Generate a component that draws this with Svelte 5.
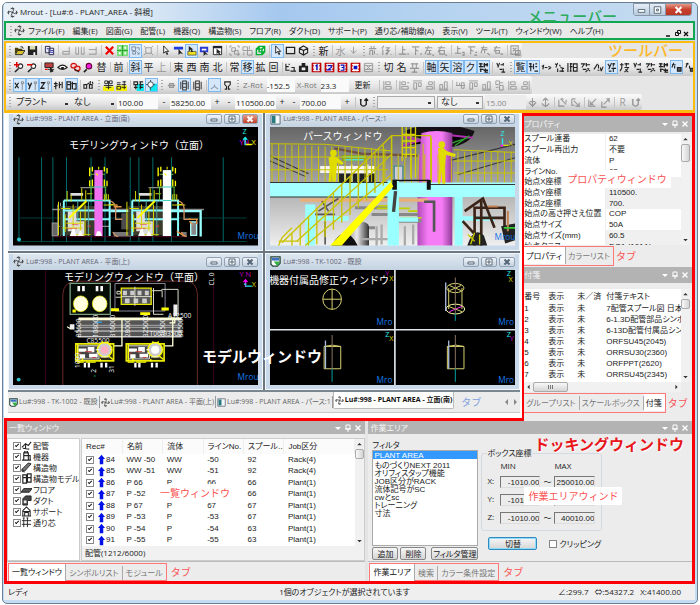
<script>
  // Toolbar tokens: '|' separator, ':' grip, '*' pressed, '~' disabled, '@' icon, otherwise a text button
  const parse = (line) =>
    line.split(' ').map((raw) => {
      if (raw === '|') return { kind: 'sep' };
      if (raw === ':') return { kind: 'grip' };
      const on = raw.startsWith('*');
      const off = raw.startsWith('~');
      const body = on || off ? raw.slice(1) : raw;
      const icon = body.startsWith('@') ? body.slice(1) : null;
      return { kind: 'button', on, off, icon, text: icon ? '' : body };
    });

  const fileTools = parse(
    ': @open @save | @copy | ~@left ~@mid ~@right | @cross @quad *@tile ~@fit | @cursor @bluebar *@yellow @bluebox @window | ~@group ~@ungroup @greencube | *@cursor @rect @cube : 新 | ~水 ~@down : ~@mae ~@ato | ~@up1 ~@dn1 ~@lf1 ~@rt1 | ~@up2 ~@dn2 ~@lf2 ~@rt2 | ~@fig'
  );
  const viewTools = parse(
    ': @zoomin @zoomout | @car @eye @hide @magenta 替 | 前 | *斜 平 ~上 | 東 西 南 北 | 常 *移 拡 回 | @view @camera @cam1 @cam2 @cam3 @cam4 ~@camoff : 切 名 ~@base | *軸 *矢 *溶 *ク *@dense | @mini1 : *覧 *@list @mini2 @mini3 @dense2 @mini4 @mini5 *@mini6 @dense3 @mini1 @mini4 @dense *@mini7 @mini8'
  );
  const snapTools = parse(': *@x *@y *@z @slant *@snap | @link : @unit @detail | @dist *@circle : @node *@valve @valve | *@peak @omega :');
  const alignTools = parse('| ~@al1 | ~@al2 ~@al3 ~@al4 ~@al5 | ~@al6 ~@al3 ~@al5 ~@al7 ~@al1 ~@al4');
  const pipeTools = parse('~@anchor ~@anchor2 | ~@arr1 ~@arr2 | ~@arr3 ~@arr4 | ~R ~@hook');

  const k = '#222';
  const mini = (d) => [{ d, s: k, w: 1.2 }];
  const al = (d) => [{ d, s: k, w: 1 }];
  const frame = 'M1.5 1.5h9v9h-9zM1.5 4h9M1.5 8h9';
  const icons = {
    open: [{ d: 'M1 10V3h3l1 1h4v2H4z', f: '#4a4208' }, { d: 'M1.5 10.500L4 6h8l-3 4.500z', f: '#d8c030', s: '#222', w: 1 }, { d: 'M7 2q3-1 3 2', s: k, w: 1 }],
    save: [{ d: 'M1 1h10v10H1z', f: '#222' }, { d: 'M3 1h6v4H3z', f: '#d8dcb0' }, { d: 'M7 8h2v3H7z', f: '#fff' }],
    copy: [{ d: 'M1.500 1.500h5v7h-5zM5.500 3.500h5v7h-5z', f: '#e8e8ff', s: '#224', w: 1 }, { d: 'M7 6h3M7 8h3M3 4h2', s: '#33a', w: 1 }],
    left: [{ d: 'M9 2v8H2V7h7', s: k, w: 1 }],
    mid: [{ d: 'M2 2v8h3V2M8 2v8h3V2', s: k, w: 1 }],
    right: [{ d: 'M2 5h8v5H2M10 2v4', s: k, w: 1 }],
    cross: [{ d: 'M2 2l8 8M10 2L2 10', s: '#f00000', w: 2.4 }],
    quad: [{ d: 'M0 0h12v12H0z', f: '#7be07b' }, { d: 'M6 0v12M0 6h12', s: '#2aa52a', w: 1 }, { d: 'M2 3h2M8 3h2M2 9h2M8 9h2', s: '#fff', w: 2 }],
    tile: [{ d: 'M2 2h4v4H2zM7 3h3v3M3 7h3v3H3zM7 7l3 3M8 10h2V8', s: '#7d8da0', w: 1 }],
    fit: [{ d: 'M3 3h6v6H3zM1 1l2 2M11 1L9 3M1 11l2-2M11 11L9 9', s: k, w: 1 }],
    cursor: [{ d: 'M4 1v8l2-2 1.500 3.500 1-.5L7 7h2.500z', f: '#fff', s: k, w: 1 }],
    bluebar: [{ d: 'M1 2h10v3H1z', f: '#1a3ce0' }, { d: 'M6 4v7l2-2 3 1z', f: k }],
    yellow: [{ d: 'M2 7h9v4H2z', f: '#f0e020', s: '#664', w: 1 }, { d: 'M3 1v6l2-2 1 3 2-1-2-2h2z', f: k }],
    bluebox: [{ d: 'M1 2h9v6H1z', f: '#2a3ad0' }, { d: 'M3 4h5v2H3z', f: '#fff' }, { d: 'M5 6v6l2-2 3 1z', f: k }],
    window: [{ d: 'M1.500 1.500h9v9h-9z', f: '#fff', s: k, w: 1 }, { d: 'M1 1h10v2.500H1z', f: '#223' }, { d: 'M5 4v6l1.500-1.500L8 11l1-1-1-2h2z', f: k }],
    group: [{ d: 'M1 3V1h2M9 1h2v2M11 9v2H9M3 11H1V9M3 3h4v4H3zM6 6h4v4H6z', s: k, w: 1 }],
    ungroup: [{ d: 'M1 2h5v4H1zM6 6h5v5H6zM8 1v4M2 8v3', s: k, w: 1 }],
    greencube: [{ d: 'M1.500 4.500h6v6h-6zM4.500 1.500h6v6h-6zM1.500 4.500l3-3M7.500 4.500l3-3M7.500 10.500l3-3', s: '#00b030', w: 1.6 }],
    rect: [{ d: 'M1.500 2.500h9v7h-9z', s: k, w: 1.4 }],
    cube: [{ d: 'M6 1l4.500 2.500v5L6 11 1.500 8.500v-5zM1.500 3.500L6 6l4.500-2.500M6 6v5', s: k, w: 1.2 }],
    down: [{ d: 'M6 2v7M3 6l3 3 3-3', s: k, w: 1 }],
    mae: mini('M1 4h8M3 1l1 2M7 1L6 3M2 6h3v5M2 6v5M7 6v4M10 10v1'),
    ato: mini('M3 1L1 4M2 5v6M5 3h4L6 6h3L5 10M9 6l-3 5M11 10v1'),
    up1: mini('M5 1v9M1 10h8M5 5h3M11 9v2'),
    dn1: mini('M1 2h8M5 2v9M5 5l3 2M11 9v2'),
    lf1: mini('M1 3h8M5 1L1 10M3 6h5M6 6v4M3 10h5M9 11h2'),
    rt1: mini('M1 3h8M5 1L1 8M3 6h5v4H3zM9 11h2'),
    up2: mini('M4 1v8M1 9h7M4 4h3M9 8h2v3H9'),
    dn2: mini('M1 2h8M4 2v8M4 5l3 2M8 11h3M9 8h2'),
    lf2: mini('M1 3h7M4 1L1 9M3 5h5M5 5v4M8 9l3 2'),
    rt2: mini('M1 3h7M4 1L1 7M3 6h4v3H3zM8 10h3'),
    fig: mini('M1 1h8v9H1zM3 3l4 4M7 3L3 7M6 6h5v5H6z'),
    zoomin: [{ d: 'M5 7L1 11', s: k, w: 1.6 }, { d: 'M4.500 4.500a2.500 2.500 0 1 0 5 0 2.500 2.500 0 1 0-5 0', f: '#fff', s: k, w: 1.2 }, { d: 'M0 3h6M3 0v6', s: '#e00000', w: 1.6 }],
    zoomout: [{ d: 'M5 7L1 11', s: k, w: 1.6 }, { d: 'M4.500 4.500a2.500 2.500 0 1 0 5 0 2.500 2.500 0 1 0-5 0', f: '#fff', s: k, w: 1.2 }, { d: 'M0 3h6', s: '#e00000', w: 1.6 }],
    car: [{ d: 'M1 1h9v5H1z', f: '#c04040', s: k, w: 1 }, { d: 'M4 8h7M7 6v5l3-1z', f: k, s: k, w: 1 }, { d: 'M1 8h3', s: '#e00', w: 1.5 }],
    eye: [{ d: 'M1 6q5-5 10 0q-5 4-10 0z', f: '#fff', s: k, w: 1.2 }, { d: 'M4.500 5.500h3v2.500h-3z', f: k }],
    hide: [{ d: 'M1 4a3 2.500 0 1 0 6 0 3 2.500 0 1 0-6 0M5 7a3 2.500 0 1 0 6 0 3 2.500 0 1 0-6 0', f: '#f8d0d0', s: '#d01010', w: 1.3 }, { d: 'M5 8l5 3', s: k, w: 1.2 }],
    magenta: [{ d: 'M4 8L1 11', s: k, w: 1.8 }, { d: 'M3.500 4.500a3 3 0 1 0 6 0 3 3 0 1 0-6 0', f: '#f020e0', s: '#603', w: 1.2 }],
    view: mini('M1 2v7h4M1 5h3M4 2l1 1M7 6h3v4M6 10h6'),
    camera: [{ d: 'M1 4h10v7H1zM4 1h4v3H4z', f: k }, { d: 'M4 6h4v3H4z', f: '#eee' }],
    cam1: [{ d: frame, f: '#e6dcea', s: '#c00000', w: 1.6 }, { d: 'M3 2h6v8H3z', f: '#f2eef8' }, { d: 'M5 4.500l1.500-1V9', s: '#1010b0', w: 1.6 }],
    cam2: [{ d: frame, f: '#e6dcea', s: '#c00000', w: 1.6 }, { d: 'M3 2h6v8H3z', f: '#f2eef8' }, { d: 'M4 4h4v2L4 8.500h4', s: '#1010b0', w: 1.3 }],
    cam3: [{ d: frame, f: '#e6dcea', s: '#c00000', w: 1.6 }, { d: 'M3 2h6v8H3z', f: '#f2eef8' }, { d: 'M4 3.500h3.500v2.500H5M7.500 6v3H4', s: '#1010b0', w: 1.3 }],
    cam4: [{ d: frame, f: '#fff', s: '#c00000', w: 1.6 }, { d: 'M3 2h6v8H3z', f: '#fff' }, { d: 'M4 4h4v4H4z', f: '#1010c0' }],
    camoff: [{ d: frame, s: k, w: 1 }, { d: 'M3 3l6 6M9 3L3 9', s: k, w: 1 }],
    base: mini('M2 2h8M4 1v6M8 1v6M1 7h10M6 7v4M3 11h6'),
    peak: [{ d: 'M2 10l4-3 4 3M6 5v2', s: '#8a98a8', w: 1.2 }],
    dense: [{ d: 'M1 2h4M3 1v5M1 5h5M7 1v5M6 3h5M10 1v4M2 8h4M3 7v4M6 9h5M8 7v4M7 11h4', s: k, w: 1.4 }],
    dense2: mini('M1 1v10M3 2h3M3 5h3M4 1v9M7 2h4v8H7zM7 6h4M3 10h2'),
    dense3: mini('M1 3h4M3 1v6l-2 3M6 2h5M8 1v4M6 6h5M7 8l3 3M10 7L6 11'),
    list: [{ d: 'M1 2h3M1 5h4M3 1v9M6 2v6M8 2h2M8 5h2M7 10h4', s: k, w: 1.2 }],
    mini1: mini('M2 1l1 3M5 1L3 6M6 3h3M9 1v3M5 8h3M9 7v4M7 11h4'),
    mini2: mini('M1 4l2 2M3 3L2 8M4 6h3M8 5l3 1M8 8l3-2'),
    mini3: mini('M1 2l2 1M4 1L2 6M6 3l1 2M4 7v4M7 6l4 1M6 10h5M9 6v5'),
    mini4: mini('M1 2h4L2 6M7 1v4M6 3h5M3 8h4M8 7l3 3M10 7l-4 4'),
    mini5: mini('M1 8l4-6M6 3v4M5 9h2M8 6l1 4M11 5l-2 5'),
    mini6: mini('M2 2l2 3M6 1L3 8M7 2h3M8 1v4M6 7h5M8 6v5M3 10h3'),
    mini7: [{ d: 'M1 3h4M3 1L1 6M4 4v3M7 6h4v4H7z', f: '#555', s: k, w: 1.2 }],
    mini8: [{ d: 'M2 2h3M4 1L2 6M6 4v3M7 7h4v3H7z', f: '#555', s: k, w: 1.2 }],
    x: [{ d: 'M1 3l4 6M5 3L1 9', s: k, w: 1.4 }, { d: 'M8 2h2.500v2H8zM9 4v7', s: '#888', w: 1 }],
    y: [{ d: 'M1 3l2 4M5 3L2 10', s: k, w: 1.4 }, { d: 'M8 2h2.500v2H8zM9 4v7', s: '#888', w: 1 }],
    z: [{ d: 'M1 3h4L1 9h4', s: k, w: 1.4 }, { d: 'M8 2h2.500v2H8zM9 4v7', s: '#888', w: 1 }],
    slant: mini('M1 4h4M3 2v8M1 7l4-1M7 2v7M6 5h3M10 2v7'),
    snap: [{ d: 'M1 2h4v8H1zM1 5h4M7 2v8M6 4h5v6H8', s: k, w: 1.3 }],
    link: mini('M1 5h3v4H1zM4 5l3-2M7 5h3v4H7zM8 1v3M10 2l1 2'),
    unit: [{ d: 'M0 7h12v5H0z', f: '#f6f000' }, { d: 'M2 1h3v3H2zM7 1h3v3H7zM1 6h10M6 1v9M3 8h6', s: k, w: 1 }],
    detail: [{ d: 'M0 6h12v6H0z', f: '#f6f000' }, { d: 'M1 3h4M1 5h4M1 7h4v3H1zM7 2h4M9 1v9M6 5h5M6 8h5', s: k, w: 1 }],
    dist: [{ d: 'M4 4h8v8H4z', f: '#10e8f0' }, { d: 'M1 2h4v3H1zM3 5v5M1 8h4M7 2h4M7 5h4M8 2v8M7 8h4', s: k, w: 1.2 }],
    circle: [{ d: 'M4 4h8v8H4z', f: '#10e8f0' }, { d: 'M2 5a3 3 0 1 0 6 0 3 3 0 1 0-6 0M5 0v2M5 8v3M0 5h2M8 5h2', f: '#fff', s: '#345', w: 1 }],
    node: [{ d: 'M2 6h8M4 4h4v4H4z', s: '#999', w: 1.4 }],
    valve: [{ d: 'M4 1h4v10H4zM4 4h4M4 8h4M2 2v8M10 2v8', s: '#333', w: 1.1 }],
    omega: mini('M3 10h2V7L3 5V2h6v3L7 7v3h2'),
    al1: al('M2 1v10M4 2h5v3H4zM4 7h6v3H4z'),
    al2: al('M1 1v10M3 2h4v3H3zM3 7h7v3H3zM9 3h2'),
    al3: al('M1 1h10M2 3h3v7H2zM7 3h3v4H7z'),
    al4: al('M10 1v10M4 2h4v3H4zM2 7h6v3H2z'),
    al5: al('M1 11h10M2 5h3v5H2zM7 2h3v8H7z'),
    al6: al('M1 6h10M2 2v4h3V3M7 3h3v6H7z'),
    al7: al('M2 1h4v4H2zM6 6h4v5H6zM6 3h4M2 8h3'),
    anchor: mini('M6 1v10M2 6l4 4 4-4M3 5h6'),
    anchor2: mini('M6 11V1M3 4l3-3 3 3M2 7q4 6 8 0'),
    arr1: mini('M2 3v7h6M4 2l6 6M4 2h3M10 3v3'),
    arr2: mini('M2 2h4M2 2v7h3M4 4l6 6h-4M10 10V6'),
    arr3: mini('M2 3v7h7M10 2L4 8M4 5v3h3'),
    arr4: mini('M2 5v6h5M4 8l6-6H7M10 2v4'),
    hook: [{ d: 'M3 3v5q3 4 6 0V2M7 4l2-2 2 2M2 3h2', s: k, w: 1.5 }],
    gyro: [{ d: 'M6 1q2 3 0 5t0 5M1 6q3-2 5 0t5 0M4 2q2-2 4 0M4 10q2 2 4 0M2 4q-2 2 0 4M10 4q2 2 0 4', s: '#333', w: 1 }],
    page: [{ d: 'M1 1h10v7l-3 3H3L1 9z', f: '#fff', s: '#243', w: 1.4 }, { d: 'M2 2h8v3H2z', f: '#4070c0' }, { d: 'M4 6h7l-3 5z', f: '#30b040' }],
    persp: [{ d: 'M1 1h10v10H1z', f: '#f4f8fb', s: '#567', w: 1 }, { d: 'M2 2h4v8H2z', f: '#2a7a80' }],
    pipe: [{ d: 'M1 8l4-4 3 2 3-4M5 4v6M2 9l7 1', s: k, w: 1.2 }],
    machine: [{ d: 'M3 2h5v8H3zM1 10h10M4 0h3v2H4zM3 5h7v5', s: k, w: 1.2 }],
    beam: [{ d: 'M1 8l7-7 3 1-7 8zM1 8v2l3 1', f: '#777', s: k, w: 1 }],
    beams: [{ d: 'M2 2h4v9H2zM7 1h4v9H7zM2 5h9', s: k, w: 1.3 }],
    floor: [{ d: 'M3 5h9l-3 4H0z', f: '#555', s: k, w: 1 }],
    duct: [{ d: 'M2 4l3-3h6v5H7v5H2z', f: '#444', s: k, w: 1 }, { d: 'M3 6h3v3H3z', f: '#eee' }],
    support: [{ d: 'M2 11V5l4-4 4 4v6M2 6h8M4 11V7h4v4M1 11h10', s: k, w: 1.1 }],
    grid: [{ d: 'M3 1v10M7 1v10M1 4h10M1 8h10M2 1h2M6 1h2', s: k, w: 1 }]
  };

  const menus = ['ファイル(F)', '編集(E)', '図面(G)', '配管(L)', '機器(Q)', '構造物(S)', 'フロア(R)', 'ダクト(D)', 'サポート(P)', '通り芯/補助線(A)', '表示(V)', 'ツール(T)', 'ウィンドウ(W)', 'ヘルプ(H)'];

  const mdiTabs = [
    { icon: 'page', text: 'Lu#:998 - TK-1002 - 既設' },
    { icon: 'gyro', text: 'Lu#:998 - PLANT AREA - 平面(上)' },
    { icon: 'persp', text: 'Lu#:998 - PLANT AREA - パース:1' },
    { icon: 'gyro', text: 'Lu#:998 - PLANT AREA - 立面(南)', active: true }
  ];

  const properties = [
    ['スプール連番', '62'],
    ['スプール再出力', '不要'],
    ['流体', 'P'],
    ['ラインNo.', '62'],
    ['始点X座標', '58250.', true],
    ['始点Y座標', '110500.', true],
    ['始点Z座標', '700.', true],
    ['始点の高さ押さえ位置', 'COP'],
    ['始点サイズ', '50A'],
    ['始点サイズ(mm)', '60.5', true],
    ['始点クラス', 'DO1 (101A)', true]
  ];

  const tags = ['7配管スプール図 日本語', '6-1.3D配管部品シンボル', '6-13D配管付属品シンボ', 'ORFSU45(2045)', 'ORRSU30(2360)', 'ORFPPT(2620)', 'ORRSU45(2345)'];

  const tree = [
    ['pipe', '配管'],
    ['machine', '機器'],
    ['beam', '構造物'],
    ['beams', '構造物モデル'],
    ['floor', 'フロア'],
    ['duct', 'ダクト'],
    ['support', 'サポート'],
    ['grid', '通り芯']
  ];

  const records = [
    [84, 'WW -50', 'WW', '-50', 92, 'Rack(4)'],
    [85, 'WW -51', 'WW', '-51', 92, 'Rack(4)'],
    [86, 'P 66', 'P', '66', 66, 'Plant(1)'],
    [87, 'P -52', 'P', '-52', 66, 'Plant(1)'],
    [88, 'P 67', 'P', '67', 67, 'Plant(1)'],
    [89, 'P -53', 'P', '-53', 67, 'Plant(1)'],
    [90, 'P -54', 'P', '-54', 63, 'Plant(1)'],
    [91, 'P -55', 'P', '-55', 63, 'Plant(1)']
  ];

  const filters = ['PLANT AREA', 'ものづくりNEXT 2011', 'オリフィスタップ機能', 'JOB区分がRACK', '流体記号がSC', 'cwとsc', 'トレーニング', '寸法'];
  let filter = $state('PLANT AREA');

  const box = [
    ['X', '-1010.00', '250010.00'],
    ['Y', '-1010.00', '130010.00'],
    ['Z', '-1010.00', '40010.00']
  ];

  const gridLines = [55, 123, 157, 198, 272, 314, 390, 416, 458, 514, 670];
  const units = [190, 396];
  const balusters = Array.from({ length: 38 }, (_, i) => 30 + i * 20);
  const steps = Array.from({ length: 13 }, (_, i) => i);
  const dims = [235, 285, 335, 382, 434, 487, 540];
</script>

{#snippet glyph(name)}
  <svg class="icon" viewBox="0 0 12 12" aria-hidden="true">
    {#each icons[name] as p}
      <path d={p.d} fill={p.f ?? 'none'} stroke={p.s ?? 'none'} stroke-width={p.w ?? 0} />
    {/each}
  </svg>
{/snippet}

{#snippet tools(items)}
  {#each items as item}
    {#if item.kind === 'sep'}
      <span class="sep"></span>
    {:else if item.kind === 'grip'}
      <span class="grip"></span>
    {:else}
      <button class="tool" class:on={item.on} class:off={item.off} aria-label={item.icon ?? item.text}>
        {#if item.icon}{@render glyph(item.icon)}{:else}{item.text}{/if}
      </button>
    {/if}
  {/each}
{/snippet}

{#snippet caption(icon, text, close)}
  <header class="child-title">
    {@render glyph(icon)}
    <span class="grow">{text}</span>
    <button class="child-btn" aria-label="最小化"><svg viewBox="0 0 12 8"><path d="M3 4h6v2H3z" fill="#fff" stroke="#567" /></svg></button>
    <button class="child-btn" aria-label="最大化"><svg viewBox="0 0 12 8"><path d="M3 1h6v6H3zM5 3h2v2H5z" fill="#fff" stroke="#567" /></svg></button>
    <button class="child-btn" class:close aria-label="閉じる"><svg viewBox="0 0 12 8"><path d="M3.500 1.500l5 5M8.500 1.500l-5 5" stroke={close ? '#fff' : '#567'} stroke-width="2" /></svg></button>
  </header>
{/snippet}

{#snippet panelTitle(text)}
  <header class="panel-title">
    <span class="grow">{text}</span>
    <svg viewBox="0 0 28 8" class="panel-marks" aria-hidden="true">
      <path d="M1 3h6L4 6z" fill="#fff" />
      <path d="M12 1h4v4h-4zM11 5h6M14 5v3" stroke="#fff" fill="none" />
      <path d="M21.500 1.500l5 5M26.500 1.500l-5 5" stroke="#fff" stroke-width="1.300" />
    </svg>
  </header>
{/snippet}

{#snippet scroll()}
  <div class="scroll" aria-hidden="true">
    <svg viewBox="0 0 8 8"><path d="M2 5h4L4 3z" fill="#333" /></svg>
    <i></i>
    <svg viewBox="0 0 8 8"><path d="M2 3h4L4 5z" fill="#333" /></svg>
  </div>
{/snippet}

<main class="app">
  <header class="title-bar">
    {@render glyph('gyro')}
    <h1 class="grow">Mrout - [Lu#:6 - PLANT_AREA - 斜視]</h1>
    <strong class="note menu-note">メニューバー</strong>
    <div class="win-buttons">
      <button aria-label="最小化"><svg viewBox="0 0 16 10"><path d="M4.500 4.500h7v3h-7z" fill="#fff" stroke="#567" /></svg></button>
      <button aria-label="元に戻す"><svg viewBox="0 0 16 10"><path d="M4.500 1.500h7v7h-7zM7 4h2v2H7z" fill="#fff" stroke="#567" /></svg></button>
      <button class="close" aria-label="閉じる"><svg viewBox="0 0 26 10"><path d="M10 2l6 6M16 2l-6 6" stroke="#fff" stroke-width="2.200" /></svg></button>
    </div>
  </header>

  <nav class="menu-bar">
    <span class="grip"></span>
    {@render glyph('gyro')}
    <div class="menus">
      {#each menus as menu}
        <button class="menu">{menu}</button>
      {/each}
    </div>
    <svg class="mdi-marks" viewBox="0 0 24 8" aria-hidden="true">
      <path d="M1 7h4" stroke="#111" stroke-width="1.500" />
      <path d="M12.500 1.500h3v3h-3zM10.500 3.500h3v3h-3z" fill="#eee" stroke="#111" />
      <path d="M19 3l4 4M23 3l-4 4" stroke="#111" stroke-width="1.300" />
    </svg>
  </nav>

  <section class="toolbars">
    <strong class="note tool-note">ツールバー</strong>
    <div class="strip">{@render tools(fileTools)}</div>
    <div class="strip tall">{@render tools(viewTools)}</div>
    <div class="strip tall">
      {@render tools(snapTools)}
      <label class="rot" for="zrot">Z-Rot</label>
      <input id="zrot" class="num" value="-152.5" />
      <label class="rot" for="xrot">X-Rot</label>
      <input id="xrot" class="num" value="23.3" />
      <button class="update">更新</button>
      {@render tools(alignTools)}
    </div>
    <div class="strip last">
      <span class="grip"></span>
      <select class="pick wide" aria-label="エリア"><option>プラント</option></select>
      <select class="pick" aria-label="基準"><option>なし</option></select>
      <input class="num value" value="100.00" aria-label="ピッチ" />
      <button class="step">-</button>
      <input class="num value" value="58250.00" aria-label="X座標" />
      <button class="step">+</button>
      <button class="step">-</button>
      <input class="num value" value="110500.00" aria-label="Y座標" />
      <button class="step">+</button>
      <button class="step">-</button>
      <input class="num value" value="700.00" aria-label="Z座標" />
      <button class="step">+</button>
      <span class="sep"></span>
      {@render tools([{ kind: 'button', icon: 'hook', text: '' }, { kind: 'grip' }])}
      <select class="pick wide boxed" aria-label="部品"><option></option></select>
      <select class="pick boxed" aria-label="角度種別"><option>なし</option></select>
      <input class="num value dim" value="15.00" aria-label="角度" />
      {@render tools(pipeTools)}
    </div>
  </section>

  <div class="work">
    <section class="mdi">
      <div class="children">
        <article class="child">
          {@render caption('gyro', 'Lu#:998 - PLANT AREA - 立面(南)', true)}
          <svg class="scene" viewBox="37 50 738 352" preserveAspectRatio="none">
            <rect x="37" y="50" width="738" height="352" fill="#000" />
            {#each gridLines as x}
              <path d="M{x} 140V392" stroke="#006a6a" stroke-width="3" />
            {/each}
            <path d="M55 320H740M55 390H740" stroke="#004040" stroke-width="3" />
            <path d="M155 376H560" stroke="#700030" stroke-width="2" />
            <path d="M155 295H612M155 345H330M240 230H300M445 230H505" stroke="#8a8a8a" stroke-width="4" />
            <path d="M330 300H600M545 300H602V375" stroke="#9ff" stroke-width="7" fill="none" />
            <rect x="363" y="306" width="32" height="48" fill="#4c4c4c" />
            <path d="M340 362H392V375H340zM545 362H560V375H545z" fill="#777" />
            <path d="M155 335h16v38h-16zM172 280v92M180 275v98" fill="#666" stroke="#999" stroke-width="3" />
            {#each units as x, i}
              <g transform="translate({x} 0)">
                <path d="M-12 285H110V372H-12z" fill="#3c3c2c" />
                <path d="M0 268H138V374M0 268V374M0 298H138M0 324H138" stroke="#8ff" stroke-width="6" fill="none" />
                <path d="M42 268v106M74 268v106" stroke="#5aa" stroke-width="3" />
                <path d="M12 300h26v60H12zM34 330h28v44H34zM20 246h38v8H20z" fill="#ddd" />
                <path d="M-8 292h28M4 310v52M28 280v80M50 300v66M64 280v90M-4 350h60M120 282h40M140 280l10 0M-16 272v100M10 240v30M22 252v20M54 232v36M66 238v30M70 248h16M122 250v18M128 248v18M134 250v18M8 336h50M20 370h60" stroke="#d8d800" stroke-width="3" />
                <path d="M16 320L68 270" stroke="#ff0" stroke-width="6" />
                <path d="M140 270q14 4 16 20v34h20M148 362q6 14 16 13" stroke="#d09060" stroke-width="4" fill="none" />
                <path d="M24 340h20M10 352h30M78 340v8M70 345h10" stroke="#e04040" stroke-width="2" />
                <path d="M82 190h42M76 228h52M82 228v40M126 228v40" stroke="#60c040" stroke-width="3" />
                <rect x="92" y="178" width="25" height="196" fill={i ? '#fff' : '#f070f0'} />
                <path d="M78 170v26M86 168v14M122 168v14M130 172v16M78 208v18M86 206v20M122 206v20M130 210v16" stroke="#ff0" stroke-width="4" />
                <path d="M97 188l6 6M105 168v8" stroke="#ff0" stroke-width="3" />
                <path d="M92 228h25M92 268h25" stroke="#40d0c0" stroke-width="3" />
                <path d="M18 374l8-22h6l6 22M42 374l8-18 8 18M96 374l4-14h10l5 14" fill="#fff" />
              </g>
            {/each}
            <path d="M572 332h18v40h-18z" fill="#888" stroke="#aff" stroke-width="4" />
            <path d="M566 324h28M568 330l10 10M590 324v14M530 360l24 14M340 287h24M350 280v10" stroke="#e09040" stroke-width="4" />
            <circle cx="55" cy="384" r="6" fill="#2bc0c8" />
            <text x="728" y="72" class="axis" fill="#2ee">Z</text>
            <text x="719" y="104" class="axis" fill="#f0f">YN</text>
            <text x="755" y="104" class="axis" fill="#ff0">X</text>
            <path d="M736 82V104M730 88l6-7 6 7" stroke="#2ee" stroke-width="4" fill="none" />
            <path d="M738 102h18" stroke="#ff0" stroke-width="4" />
            <text x="713" y="384" class="brand">Mrou</text>
          </svg>
          <span class="note scene-note">モデリングウィンドウ（立面）</span>
        </article>

        <article class="child">
          {@render caption('persp', 'Lu#:998 - PLANT AREA - パース:1', false)}
          <svg class="scene" viewBox="24 48 738 355" preserveAspectRatio="none">
            <defs>
              <linearGradient id="sky" x2="0" y2="1"><stop stop-color="#666" /><stop offset="1" stop-color="#efefef" /></linearGradient>
              <linearGradient id="tower"><stop stop-color="#b048b8" /><stop offset=".3" stop-color="#f57cf5" /><stop offset=".7" stop-color="#f57cf5" /><stop offset="1" stop-color="#903a98" /></linearGradient>
              <linearGradient id="vessel"><stop stop-color="#888" /><stop offset=".5" stop-color="#e8e8e8" /><stop offset="1" stop-color="#333" /></linearGradient>
            </defs>
            <rect x="24" y="48" width="738" height="355" fill="url(#sky)" />
            <path d="M24 135L140 188M560 150L762 100M24 150L130 196M590 190L762 140" stroke="#333" stroke-width="3" />
            <path d="M175 165H340V186H175z" fill="#f4f4f4" />
            <path d="M240 132H315V150H240z" fill="#90a020" />
            <path d="M244 138h66M248 146h58" stroke="#4ee0e0" stroke-width="4" />
            <path d="M232 188H340V214H232z" fill="#222" />
            <path d="M250 178v36M270 160v54M290 186v28M318 160v54" stroke="#e8e8e0" stroke-width="6" />
            <path d="M218 112L300 128L470 134" stroke="#705040" stroke-width="7" fill="none" />
            <path d="M398 165h26v44h-26z" fill="#ccd" stroke="#4a8a8a" stroke-width="4" />
            <path d="M430 60Q520 20 640 60Q630 100 560 110L470 80Q440 76 430 60z" fill="#151015" />
            <path d="M420 105L540 70L635 80M425 75L500 95" stroke="#b030b0" stroke-width="6" />
            <path d="M560 100l60-20M580 104l44-30" stroke="#30a030" stroke-width="4" />
            <path d="M480 66Q525 54 573 66V403H468V200z" fill="url(#tower)" />
            <path d="M422 48V150M434 48V140M448 48V200M462 48V200M422 70h42M422 90h42M422 110h42M422 130h42" stroke="#d8d400" stroke-width="4" />
            <g stroke="#c9c400" stroke-width="3" fill="none">
              {#each balusters as x}
                <path d="M{x} {x < 390 ? 98 + x / 25 : x > 570 ? 122 : 130}V216" />
              {/each}
              <path d="M24 98L190 100L390 120M24 138H380M24 176H380M485 98V216M510 80V216M578 116L762 124M578 150H762M578 186H762" />
            </g>
            <path d="M115 262H500V272H115z" fill="#e8b078" />
            <path d="M130 280H160V403H130zM580 258H604V403H580z" fill="#9ff" />
            <path d="M180 270L200 300M170 300L230 262M190 330v70M160 310h60" stroke="#555" stroke-width="5" />
            <path d="M280 290h120M330 310h140M400 330h80M290 350h50" stroke="#888" stroke-width="9" />
            <path d="M440 300h28M420 320h60M350 284h40M345 292h100" stroke="#c0d000" stroke-width="5" />
            <path d="M160 322H260M410 325H470M580 322H700" stroke="#9ff" stroke-width="14" />
            <path d="M272 345Q310 320 322 345V403H250z" fill="url(#vessel)" />
            <path d="M210 403Q250 330 288 403z" fill="#111" />
            <path d="M345 345v58M360 340v60M430 345v58M455 340v60M300 384h80" stroke="#aaa" stroke-width="7" />
            <path d="M24 214H762V258H24z" fill="#a4ffff" />
            <path d="M24 214H400M500 220H762M24 258H380" stroke="#333" stroke-width="3" />
            <path d="M378 208H412V403H378z" fill="#9ff" />
            <path d="M392 206h14v30h-14zM496 206h12v30h-12z" fill="#111" />
            <path d="M400 208H500" stroke="#111" stroke-width="4" />
            <path d="M402 240L396 302" stroke="#444" stroke-width="10" />
            <path d="M388 212L395 226L240 403H205z" fill="#ff0" />
            <g stroke="#c9c400" stroke-width="4" fill="none">
              <path d="M60 395L390 74H508M105 390L390 130M130 403L390 190M390 74V215M508 74V205" />
              {#each steps as s}
                <path d="M{90 + s * 25} {366 - s * 24}V{Math.min(403, 466 - s * 22)}" />
              {/each}
              <path d="M50 403L60 380L90 350M50 390h60" />
            </g>
            <g fill="#e0dc00">
              <circle cx="215" cy="126" r="10" />
              <path d="M200 140L212 134L228 140L246 156L240 162L226 154L224 180L222 212H212L210 184L207 212H200L204 170z" />
              <circle cx="541" cy="101" r="10" />
              <path d="M530 112L545 110L556 120L584 130L580 138L554 132L550 170L552 218H543L540 180L537 218H530L534 168z" />
            </g>
            <path d="M488 272h30v90" stroke="#555" stroke-width="8" fill="none" />
            <path d="M610 300L665 262L700 350M640 403V290H730V370M640 320h90M660 270v133M604 330L660 390" stroke="#3a2418" stroke-width="8" fill="none" />
            <path d="M618 403q20-60 50-30l10 30zM720 345l42-8v50l-30 10z" fill="#222" />
            <path d="M680 286h30M740 300v60" stroke="#c08050" stroke-width="6" />
            <path d="M620 370l20 20M640 365l-12 34M655 370v30" stroke="#cc0" stroke-width="4" />
            <path d="M728 350h34" stroke="#3c3" stroke-width="5" />
            <text x="718" y="74" class="axis" fill="#2ee">Z</text>
            <text x="742" y="104" class="axis" fill="#dd0">X</text>
            <path d="M724 82V104" stroke="#2ee" stroke-width="4" />
            <path d="M724 103h18" stroke="#dd0" stroke-width="4" />
            <path d="M718 104h8" stroke="#f0f" stroke-width="5" />
            <text x="700" y="386" class="brand">Mrou</text>
          </svg>
          <span class="note scene-note parse-note">パースウィンドウ</span>
        </article>

        <article class="child">
          {@render caption('gyro', 'Lu#:998 - PLANT AREA - 平面(上)', false)}
          <svg class="scene" viewBox="37 57 738 352" preserveAspectRatio="none">
            <rect x="37" y="57" width="738" height="352" fill="#000" />
            <path d="M135 57V409M641 100V409" stroke="#3a0020" stroke-width="3" />
            <path d="M187 409V130Q190 92 230 91H560Q590 94 592 130V409" stroke="#6a2c2c" stroke-width="3" fill="none" />
            <path d="M209 98H330V192H209z" stroke="#7aa080" stroke-width="4" fill="#060c06" />
            <path d="M344 98H495V182H344z" stroke="#889" stroke-width="3" fill="none" />
            <path d="M231 106h8v16h-8zM245 106h8v16h-8zM286 106h8v16h-8zM300 106h8v16h-8z" fill="#fff" />
            <ellipse cx="241" cy="160" rx="22" ry="24" fill="#ffffe0" stroke="#ff0" stroke-width="2" />
            <ellipse cx="298" cy="160" rx="22" ry="24" fill="#ffffe0" stroke="#ff0" stroke-width="2" />
            <path d="M363 112H453V162H363z" fill="#555" stroke="#e8e800" stroke-width="4" />
            <path d="M368 120h12v14h-12zM390 120h12v14h-12zM412 120h12v14h-12zM434 120h12v14h-12zM374 144h14v14h-14zM400 144h14v14h-14zM426 144h14v14h-14z" fill="#ccc" />
            <path d="M363 138h92M346 140h16M404 108v58M456 120h30v20M460 112v80h30M350 122h10v8h-10zM484 116h50v80" stroke="#ddc" stroke-width="3" fill="none" />
            <path d="M332 178h24M484 176h22M420 190h30M216 182h10" stroke="#ff0" stroke-width="9" />
            <path d="M232 206H545V264H232z" fill="#555" />
            <path d="M234 206H545" stroke="#ffffd8" stroke-width="8" />
            <path d="M236 226H540M236 232H540" stroke="#999" stroke-width="4" />
            <path d="M222 243H545M232 260H545" stroke="#ddd" stroke-width="3" />
            <path d="M285 216h20" stroke="#3ae" stroke-width="4" />
            {#each dims as x, i}
              <text transform="translate({x + 8} 262) rotate(-90)" class="dimension">{['85600', '108000', '316000', '28000', '325000', '48500', '38500'][i]}</text>
            {/each}
            <text x="504" y="202" class="dimension">A12500</text>
            <text x="448" y="258" class="dimension">T06/93500</text>
            <text x="258" y="280" class="dimension">C85500</text>
            <path d="M520 162h12v36h-12zM208 222h14v16h-14z" fill="#eee" />
            <path d="M365 206v82h-30M518 206v82h-30M508 204h16v14h-16M200 230l10 6" stroke="#ffffd8" stroke-width="4" fill="none" />
            {#each [226, 378] as x, i}
              <g transform="translate({x} 0)">
                <path d="M0 282H114V334H0z" fill="#2a2a10" stroke="#e8e800" stroke-width="5" />
                <path d="M6 288H70V328H6z" fill="#444" stroke="#ddd" stroke-width="3" />
                <path d="M8 296h24v10H8zM36 292h20v16H36zM12 314h16v12H12zM40 312h26v12H40z" fill="#fff" />
                <path d="M8 310h8M28 306h20M50 324h10" stroke="#c33" stroke-width="3" />
                <path d="M4 338h20M30 338h30M74 328v8M100 320l12 10M80 282v-8M96 282v-8M6 282v52M20 334v-8" stroke="#ff0" stroke-width="4" />
                <circle cx="87" cy="300" r="22" fill="#ccc" stroke="#ff0" stroke-width="4" />
                <circle cx="87" cy="300" r="12" fill={i ? '#fff' : '#ffb0c0'} />
                <path d="M24 340h7v14h-7zM36 340h7v14h-7zM74 340h7v14h-7zM88 340h7v14h-7z" fill="#fff" />
                <path d="M60 300h10M62 310h8M74 322h26" stroke="#fff" stroke-width="3" />
              </g>
            {/each}
            <text transform="translate(238 356) rotate(-90)" class="dimension">1000</text>
            <text transform="translate(288 370) rotate(-90)" class="dimension">2</text>
            <text transform="translate(340 370) rotate(-90)" class="dimension">31</text>
            <text transform="translate(641 104) rotate(-90)" class="dimension">CL 0</text>
            <circle cx="54" cy="391" r="6" fill="#2bc0c8" />
            <circle cx="283" cy="380" r="3" fill="#063" />
            <text x="719" y="79" class="axis" fill="#c0c">Y N</text>
            <text x="756" y="110" class="axis" fill="#dd0">X</text>
            <path d="M737 88V108M731 94l6-7 6 7" stroke="#f0f" stroke-width="4" fill="none" />
            <path d="M736 106h20M732 100h8" stroke="#2ee" stroke-width="4" />
            <text x="713" y="392" class="brand">Mrou</text>
          </svg>
          <span class="note scene-note plan-note">モデリングウィンドウ（平面）</span>
        </article>

        <article class="child">
          {@render caption('page', 'Lu#:998 - TK-1002 - 既設', false)}
          <svg class="scene" viewBox="24 57 738 352" preserveAspectRatio="none">
            <rect x="24" y="57" width="738" height="352" fill="#000" />
            <g stroke="#d8d070" stroke-width="3" fill="none">
              <ellipse cx="211" cy="146" rx="28" ry="31" />
              <path d="M183 146h56M211 115v62" />
              <ellipse cx="582" cy="112" rx="26" ry="14" />
              <ellipse cx="582" cy="176" rx="28" ry="15" stroke="#ffffa0" />
              <path d="M562 112V176M602 112V176M564 104l36 16M600 104l-36 16M562 168l40 16" />
              <path d="M187 290V358H237V290Q212 282 187 290h50M558 290V358H608V290Q583 282 558 290h50" />
            </g>
            <path d="M564 184l38-16" stroke="#f3f" stroke-width="3" />
            <path d="M553 95V182M191 272V358M562 272V358" stroke="#a8b8d8" stroke-width="4" />
            <path d="M582 80V190M211 255V358M582 255V358" stroke="#8a7464" stroke-width="3" />
            <path d="M582 190V212M211 358V398M582 358V398" stroke="#00a0a0" stroke-width="3" />
            <path d="M400 57V409M24 239H762" stroke="#dde4ea" stroke-width="5" />
            <g class="axis">
              <text x="371" y="76" fill="#c0c">Y</text><text x="383" y="90" fill="#dd0">X</text>
              <text x="737" y="76" fill="#2ee">Z</text><text x="742" y="94" fill="#dd0">X</text>
              <text x="371" y="260" fill="#2ee">Z</text><text x="383" y="272" fill="#dd0">X</text>
              <text x="737" y="260" fill="#2ee">Z</text><text x="746" y="274" fill="#c0c">Y</text>
            </g>
            <text x="345" y="226" class="brand">Mro</text>
            <text x="711" y="226" class="brand">Mro</text>
            <text x="345" y="401" class="brand">Mro</text>
            <text x="711" y="401" class="brand">Mro</text>
          </svg>
          <span class="note scene-note part-note">機器付属品修正ウィンドウ</span>
        </article>
        <strong class="note model-note">モデルウィンドウ</strong>
      </div>

      <nav class="mdi-tabs">
        {#each mdiTabs as tab}
          <button class="mdi-tab" class:active={tab.active}>{@render glyph(tab.icon)}{tab.text}</button>
        {/each}
        <span class="note tab-note blue grow">タブ</span>
        <svg class="mdi-arrows" viewBox="0 0 14 8" aria-hidden="true"><path d="M4 1v6L1 4zM10 1v6l3-3z" fill="#888" /></svg>
      </nav>
    </section>

    <aside class="side">
      <section class="panel">
        {@render panelTitle('プロパティ')}
        <div class="list props">
          <div class="clip">
            <table>
              <tbody>
                {#each properties as [name, value, locked]}
                  <tr><th scope="row">{name}</th><td class:locked>{value}</td></tr>
                {/each}
              </tbody>
            </table>
          </div>
          {@render scroll()}
          <span class="note panel-note prop-note">プロパティウィンドウ</span>
        </div>
        <nav class="tabs">
          <div class="outline">
            <button class="tab active">プロパティ</button>
            <button class="tab">カラーリスト</button>
          </div>
          <span class="note tab-note">タブ</span>
        </nav>
      </section>
      <section class="panel">
        {@render panelTitle('付箋')}
        <div class="list tags">
          <div class="clip">
            <table>
              <thead><tr><th>番号</th><th>表示</th><th>未／済</th><th>付箋テキスト</th></tr></thead>
              <tbody>
                {#each tags as tag, i}
                  <tr><td>{i + 1}</td><td>表示</td><td>未</td><td>{tag}</td></tr>
                {/each}
              </tbody>
            </table>
          </div>
          {@render scroll()}
        </div>
        <div class="hscroll" aria-hidden="true">
          <svg viewBox="0 0 8 8"><path d="M5 2v4L3 4z" fill="#333" /></svg>
          <i><svg viewBox="0 0 8 8"><path d="M2 2v4M4 2v4M6 2v4" stroke="#777" /></svg></i>
          <svg viewBox="0 0 8 8"><path d="M3 2v4l2-2z" fill="#333" /></svg>
        </div>
        <nav class="tabs">
          <div class="outline">
            <button class="tab">グループリスト</button>
            <button class="tab">スケールボックス</button>
            <button class="tab active">付箋</button>
          </div>
          <span class="note tab-note">タブ</span>
        </nav>
      </section>
    </aside>
  </div>

  <div class="docks">
    <section class="panel dock">
      {@render panelTitle('一覧ウィンドウ')}
      <div class="dock-body">
        <ul class="tree">
          {#each tree as [icon, text]}
            <li><label><input type="checkbox" class="tick" checked />{@render glyph(icon)}<span>{text}</span></label></li>
          {/each}
        </ul>
        <div class="records">
          <div class="list">
            <div class="clip">
              <table>
                <thead><tr><th>Rec#</th><th>名前</th><th>流体</th><th>ラインNo.</th><th>スプール...</th><th>Job区分</th></tr></thead>
                <tbody>
                  {#each records as [rec, name, fluid, line, spool, job]}
                    <tr>
                      <td>
                        <label class="rec">
                          <input type="checkbox" class="tick" checked />
                          <svg class="up" viewBox="0 0 8 11"><path d="M4 0l4 5H6v6H2V5H0z" fill="#0010e8" /></svg>{rec}
                        </label>
                      </td>
                      <td>{name}</td><td>{fluid}</td><td>{line}</td><td>{spool}</td><td>{job}</td>
                    </tr>
                  {/each}
                </tbody>
              </table>
            </div>
            {@render scroll()}
            <span class="note panel-note list-note">一覧ウィンドウ</span>
          </div>
          <p class="summary">配管(1212/6000)</p>
        </div>
      </div>
      <nav class="tabs">
        <div class="outline">
          <button class="tab active">一覧ウィンドウ</button>
          <button class="tab">シンボルリスト</button>
          <button class="tab">モジュール</button>
        </div>
        <span class="note tab-note">タブ</span>
      </nav>
    </section>

    <section class="panel dock area">
      {@render panelTitle('作業エリア')}
      <strong class="note dock-note">ドッキングウィンドウ</strong>
      <div class="dock-body">
        <div class="filter">
          <label for="filters">フィルタ</label>
          <select id="filters" size="8" bind:value={filter}>
            {#each filters as name}
              <option value={name}>{name}</option>
            {/each}
          </select>
          <div class="filter-buttons">
            <button>追加</button>
            <button>削除</button>
            <button class="manage">フィルタ管理</button>
          </div>
        </div>
        <div class="bounds">
          <fieldset>
            <legend>ボックス座標</legend>
            <div class="coords">
              <span></span><span class="head">MIN</span><span></span><span class="head">MAX</span>
              {#each box as [axis, min, max]}
                <label for="min{axis}">{axis}:</label>
                <input id="min{axis}" value={min} readonly />
                <span>～</span>
                <input value={max} aria-label="{axis} MAX" readonly />
              {/each}
            </div>
            <span class="note panel-note area-note">作業エリアウィンド</span>
          </fieldset>
          <div class="apply">
            <button class="switch">切替</button>
            <label><input type="checkbox" class="tick" />クリッピング</label>
          </div>
        </div>
      </div>
      <nav class="tabs">
        <div class="outline">
          <button class="tab active">作業エリア</button>
          <button class="tab">検索</button>
          <button class="tab">カラー条件設定</button>
        </div>
        <span class="note tab-note">タブ</span>
      </nav>
    </section>
  </div>

  <footer class="status">
    <span class="ready">レディ</span>
    <span>1個のオブジェクトが選択されています</span>
    <span class="readout"><span>∠:299.7</span><span>⇔:54327.2</span><span>X:41400.00</span></span>
  </footer>
</main>

<style>
  :global(body) {
    margin: 0;
    background: #fff;
  }

  .app {
    box-sizing: border-box;
    min-height: calc(100vh - 3px);
    display: flex;
    flex-direction: column;
    margin: 2px 2px 0;
    padding: 0 2px 3px 1px;
    border: 1px solid #6d7f92;
    border-radius: 5px;
    background: #c4dcf2;
    color: #222;
    font-family: 'Open Sans', 'Noto Sans CJK JP', sans-serif;
    font-feature-settings: 'palt';
    font-size: 8px;
    line-height: 10px;
    overflow: hidden;
  }

  button,
  input,
  select {
    box-sizing: border-box;
    margin: 0;
    padding: 0;
    border: 0;
    background: none;
    color: inherit;
    font: inherit;
    font-feature-settings: inherit;
    border-radius: 0;
  }

  .grow {
    flex: 1;
  }

  .icon {
    width: 11px;
    height: 11px;
    flex: none;
    display: block;
  }

  .note {
    white-space: nowrap;
    font-feature-settings: normal;
    font-family: 'Noto Sans CJK JP', sans-serif;
  }

  /* title and menu */
  .title-bar {
    position: relative;
    display: flex;
    align-items: center;
    gap: 2px;
    height: 18px;
    padding-left: 3px;
    background: linear-gradient(90deg, #e9f1f8, #dce9f5 20%, #a5c8ef 40%, #b4d2f0 60%, #c6dcf0);
  }

  h1 {
    margin: 0;
    font-size: 8px;
    font-weight: normal;
  }

  .menu-note {
    position: absolute;
    z-index: 3;
    right: 78px;
    top: 4px;
    font-size: 15px;
    line-height: 18px;
    font-weight: 500;
    color: #2eab5c;
  }

  .win-buttons {
    display: flex;
    align-self: flex-start;
    margin-right: 3px;
    border: 1px solid #8795a8;
    border-radius: 0 0 3px 3px;
    overflow: hidden;
  }

  .win-buttons button {
    width: 16px;
    height: 11px;
    border-right: 1px solid #8795a8;
    background: linear-gradient(#e6eef6, #b8cbdd);
  }

  .win-buttons button.close {
    width: 25px;
    border: 0;
    background: linear-gradient(#e59a88, #c8402c 50%, #b83828);
  }

  .win-buttons svg {
    display: block;
    width: 100%;
    height: 10px;
  }

  .menu-bar {
    display: flex;
    align-items: center;
    height: 19px;
    box-sizing: border-box;
    padding-left: 1px;
    border: 2px solid #0fa850;
    background: #e9e9ea;
  }

  .menus {
    display: flex;
    gap: 8px;
    margin-left: 3px;
  }

  .menu {
    font-size: 8px;
    white-space: nowrap;
  }

  .mdi-marks {
    width: 24px;
    height: 8px;
    margin: 4px 4px 0 auto;
  }

  /* toolbars */
  .toolbars {
    position: relative;
    margin-top: 1px;
    border: 2px solid #fdbb10;
    border-bottom-width: 3px;
    background: #e6e6e6;
    display: flex;
    flex-direction: column;
    align-items: flex-start;
  }

  .tool-note {
    position: absolute;
    right: 10px;
    top: -2px;
    font-size: 15px;
    line-height: 18px;
    font-weight: 500;
    color: #fbb829;
  }

  .strip {
    display: flex;
    align-items: center;
    max-width: 100%;
    height: 15px;
    border-radius: 2px;
    background: linear-gradient(#fbfbfb, #e4e4e4 60%, #c9c9c9);
    overflow: hidden;
  }

  .strip.tall {
    height: 18px;
  }

  .strip.last {
    height: 16px;
  }

  .grip {
    flex: none;
    width: 2px;
    height: 10px;
    margin: 0 2px 0 3px;
    background: repeating-linear-gradient(#aaa 0 1px, transparent 1px 3px);
  }

  .sep {
    flex: none;
    width: 1px;
    height: 11px;
    margin: 0 1px 0 2px;
    background: #c4c4c4;
  }

  .tool {
    flex: none;
    width: 13px;
    height: 14px;
    display: flex;
    align-items: center;
    justify-content: center;
    font-size: 10px;
    line-height: 12px;
    font-feature-settings: normal;
  }

  .tool.on {
    border: 1px solid #7db8ee;
    background: #d5e8fb;
  }

  .tool.off {
    opacity: 0.4;
  }

  .rot {
    margin: 0 4px 0 2px;
    color: #777;
  }

  .num {
    width: 28px;
    height: 14px;
    background: #fafafa;
    font-size: 8px;
  }

  .update {
    margin: 0 6px;
  }

  .pick {
    appearance: none;
    width: 46px;
    height: 13px;
    padding-left: 3px;
    font-size: 9px;
    background: linear-gradient(#333, #333) right 3px bottom 4px / 3px 2px no-repeat;
  }

  .pick.wide {
    width: 58px;
  }

  .pick.boxed {
    margin-right: 2px;
    border: 1px solid #aaa;
    background-color: #f0f0f0;
  }

  .value {
    width: 41px;
    padding-left: 1px;
  }

  .value.dim {
    color: #888;
    background: #ececec;
  }

  .step {
    width: 12px;
    height: 13px;
    font-size: 9px;
  }

  /* document windows */
  .work {
    display: flex;
    flex: 1;
  }

  .mdi {
    flex: 1;
    min-width: 0;
    display: flex;
    flex-direction: column;
    padding: 0 2px 0 4px;
    border-bottom: 3px solid #fb0007;
    background: #fff;
  }

  .children {
    position: relative;
    flex: 1;
    display: grid;
    grid-template-columns: 1fr 1fr;
    grid-template-rows: 1fr 1fr;
    gap: 2px;
    background: #6b7680;
    border-bottom: 2px solid #7b8790;
  }

  .child {
    position: relative;
    display: flex;
    flex-direction: column;
    min-width: 0;
    padding: 0 4px 4px 4px;
    border: 1px solid #f2f7fb;
    background: #c9d9e9;
  }

  .child-title {
    display: flex;
    align-items: center;
    gap: 2px;
    flex: 0 0 16px;
    color: #667;
    font-size: 7px;
    background: linear-gradient(#dfe7ef, #c4d3e2);
  }

  .child:nth-child(-n + 2) .child-title {
    flex-basis: 13px;
    align-items: flex-start;
  }

  .child-btn {
    width: 16px;
    height: 10px;
    border: 1px solid #92a2b4;
    border-radius: 2px;
    background: linear-gradient(#f0f4f8, #c4d2e0);
  }

  .child-btn.close {
    background: linear-gradient(#e59a88, #c0402c);
  }

  .child-btn svg {
    display: block;
    width: 100%;
    height: 8px;
  }

  .scene {
    flex: 1 1 100px;
    min-height: 0;
    display: block;
    width: 100%;
  }

  .axis {
    font-size: 22px;
  }

  .brand {
    font-size: 25px;
    fill: #1878e8;
  }

  .dimension {
    font-size: 20px;
    fill: #f4f4f4;
  }

  .scene-note {
    position: absolute;
    left: 60px;
    top: 25px;
    font-size: 10px;
    line-height: 12px;
    color: #fff;
  }

  .parse-note {
    left: 37px;
    top: 16px;
  }

  .plan-note {
    left: 55px;
    top: 17px;
  }

  .part-note {
    left: 3px;
    top: 20px;
  }

  .model-note {
    position: absolute;
    left: 194px;
    bottom: 25px;
    font-size: 15px;
    line-height: 18px;
    color: #fff;
  }

  .mdi-tabs {
    display: flex;
    align-items: center;
    height: 20px;
    margin-bottom: 5px;
    border-bottom: 1px solid #c8c8c8;
    background: #ececec;
  }

  .mdi-tab {
    display: flex;
    align-items: center;
    gap: 1px;
    height: 12px;
    padding: 0 1px;
    border-right: 1px solid #999;
    color: #666;
    font-size: 7px;
    white-space: nowrap;
  }

  .mdi-tab .icon {
    width: 9px;
    height: 9px;
  }

  .mdi-tab.active {
    align-self: flex-start;
    height: 17px;
    border: 1px solid #bbb;
    border-top: 0;
    border-radius: 0 0 2px 2px;
    background: #fff;
    color: #111;
    font-weight: bold;
  }

  .mdi-arrows {
    width: 14px;
    height: 8px;
    margin-right: 2px;
  }

  .tab-note {
    margin-left: 4px;
    font-size: 10px;
    line-height: 12px;
    color: #fa5252;
  }

  .tab-note.blue {
    margin-left: 7px;
    color: #7f9fdc;
  }

  /* docked panels */
  .side {
    flex: 0 0 25%;
    min-width: 0;
    box-sizing: border-box;
    display: flex;
    flex-direction: column;
    border: 3px solid #fb0007;
    border-bottom: 0;
    border-left-width: 2px;
    background: #ececec;
    overflow: hidden;
  }

  .panel {
    position: relative;
    display: flex;
    flex-direction: column;
    min-width: 0;
    background: #ececec;
  }

  .side .panel:last-child {
    flex: 1;
  }

  .panel-title {
    display: flex;
    align-items: center;
    height: 16px;
    background: #b3b3b3;
    color: #f6f6f6;
    font-size: 8px;
  }

  .side .panel-title {
    margin-bottom: 2px;
  }

  .panel-marks {
    width: 28px;
    height: 8px;
    margin-right: 3px;
  }

  .list {
    position: relative;
    display: flex;
    background: #fff;
    font-family: 'Liberation Sans', 'Noto Sans CJK JP', sans-serif;
  }

  .clip {
    flex: 1;
    min-width: 0;
    overflow: hidden;
  }

  table {
    width: 100%;
    border-collapse: collapse;
    table-layout: fixed;
  }

  th,
  td {
    padding: 0;
    font-weight: normal;
    text-align: left;
    white-space: nowrap;
    overflow: hidden;
    line-height: 10px;
  }

  .props {
    height: 111px;
    margin-right: 2px;
  }

  .props table {
    height: 118px;
  }

  .props td {
    width: 46%;
    padding-left: 3px;
    border-left: 1px solid #eee;
  }

  .props td.locked {
    background: #f0f0f0;
  }

  .tags {
    height: 93px;
    margin: 4px 2px 0 0;
  }

  .tags table {
    height: 91px;
  }

  .tags thead tr {
    height: 15px;
  }

  .tags th:nth-child(1) {
    width: 24px;
  }

  .tags th:nth-child(2) {
    width: 29px;
  }

  .tags th:nth-child(3) {
    width: 29px;
  }

  .scroll {
    flex: 0 0 9px;
    display: flex;
    flex-direction: column;
    background: #f1f1f1;
  }

  .scroll svg,
  .hscroll svg {
    width: 9px;
    height: 10px;
  }

  .scroll i {
    height: 18px;
    box-sizing: border-box;
    margin-bottom: auto;
    border: 1px solid #aaa;
    border-radius: 2px;
    background: linear-gradient(90deg, #f8f8f8, #d4d4d4);
  }

  .tags .scroll i,
  .records .scroll i {
    height: 10px;
  }

  .hscroll {
    display: flex;
    height: 10px;
    margin-right: 11px;
    background: #f1f1f1;
  }

  .hscroll i {
    display: flex;
    align-items: center;
    justify-content: center;
    width: 35px;
    margin-right: auto;
    box-sizing: border-box;
    border: 1px solid #aaa;
    border-radius: 2px;
    background: linear-gradient(#f8f8f8, #d4d4d4);
  }

  .hscroll i svg {
    height: 8px;
  }

  .tabs {
    display: flex;
    align-items: center;
    height: 22px;
  }

  .outline {
    display: flex;
    align-items: flex-start;
    box-sizing: border-box;
    height: 20px;
    border: 1px solid #f77;
  }

  .side .outline {
    border-left: 0;
  }

  .tab {
    height: 14px;
    margin: 2px 0;
    padding: 0 3px;
    border-right: 1px solid #aaa;
    color: #777;
    white-space: nowrap;
    font-size: 8px;
  }

  .side .tab {
    padding: 0 3px 0 2px;
  }

  .tab.active {
    height: 17px;
    margin: 0;
    background: #fff;
    color: #111;
  }

  .tab:last-child {
    border-right: 0;
  }

  .side .tab-note {
    margin-left: 2px;
  }

  .panel-note {
    position: absolute;
    padding: 3px 4px;
    background: #fff;
    font-size: 10px;
    line-height: 12px;
    color: #fa5252;
  }

  .prop-note {
    left: 39px;
    top: 36px;
  }

  .list-note {
    left: 74px;
    top: 45px;
  }

  .area-note {
    left: 42px;
    top: 29px;
  }

  .docks {
    display: flex;
    gap: 3px;
    border: 3px solid #fb0007;
    border-top: 0;
    background: #e4e4e4;
  }

  .dock {
    flex: 1 1 360px;
  }

  .area {
    flex: 1 1 325px;
  }

  .dock .panel-title {
    height: 13px;
    margin-bottom: 4px;
    padding-left: 2px;
  }

  .dock-body {
    display: flex;
    height: 123px;
    border-bottom: 1px solid #bbb;
  }

  .tree {
    width: 73px;
    margin: 0 1px 0 0;
    padding: 1px 0 0 5px;
    box-sizing: border-box;
    list-style: none;
    background: #fff;
    border: 1px solid #ccc;
    white-space: nowrap;
    overflow: hidden;
  }

  .tree label,
  .rec {
    display: flex;
    align-items: center;
    height: 11px;
  }

  .tree .icon {
    margin-right: 1px;
  }

  .tick {
    appearance: none;
    position: relative;
    flex: none;
    width: 8px;
    height: 8px;
    border: 1px solid #888;
    background: #fff;
  }

  .tick:checked::after {
    content: '';
    position: absolute;
    left: 2px;
    top: 0;
    width: 1px;
    height: 3px;
    border: solid #111;
    border-width: 0 1px 1px 0;
    transform: rotate(45deg);
  }

  .records {
    flex: 1;
    min-width: 0;
    border: 1px solid #ccc;
    background: #f1f1f1;
  }

  .records .list {
    height: 107px;
  }

  .records table {
    height: 107px;
  }

  .records thead tr {
    height: 15px;
  }

  .records th,
  .records td {
    padding-left: 4px;
  }

  .records th {
    background: #fbfbfb;
    border-right: 1px solid #eee;
  }

  .records th:last-child {
    width: 66px;
  }

  .up {
    width: 7px;
    height: 11px;
    margin: 0 1px 0 4px;
  }

  .summary {
    margin: 0;
    padding-left: 3px;
    line-height: 14px;
  }

  .filter {
    display: flex;
    flex-direction: column;
    width: 106px;
    margin-left: 4px;
    padding-top: 2px;
  }

  .filter select {
    flex: 1;
    min-height: 0;
    border: 1px solid #aaa;
    background: #fff;
    overflow: hidden;
    outline: 0;
    font-family: 'Liberation Sans', 'Noto Sans CJK JP', sans-serif;
  }

  .filter option {
    min-height: 0;
    padding: 0 1px;
    line-height: 8px;
    font-size: 8px;
    height: 8px;
  }

  .filter option:checked {
    background: linear-gradient(#3399ff, #3399ff);
    color: #fff;
  }

  .filter-buttons {
    display: flex;
    gap: 2px;
    padding: 1px 0;
  }

  .filter-buttons button,
  .switch {
    height: 13px;
    padding: 0 4px;
    border: 1px solid #888;
    border-radius: 2px;
    background: linear-gradient(#f6f6f6, #d6d6d6);
    white-space: nowrap;
  }

  .filter-buttons .manage {
    margin-left: auto;
    padding: 0 1px;
  }

  .bounds {
    margin-left: 3px;
    padding-top: 10px;
  }

  fieldset {
    position: relative;
    min-width: 0;
    margin: 0;
    padding: 2px 6px 0 5px;
    border: 1px solid #d4dae2;
    border-radius: 3px;
  }

  legend {
    padding: 0;
  }

  .coords {
    display: grid;
    grid-template-columns: 10px 40px 8px 41px;
    column-gap: 3px;
    align-items: center;
  }

  .coords > * {
    height: 12px;
    margin-bottom: 6px;
  }

  .coords .head {
    height: 10px;
    margin-bottom: 4px;
  }

  .coords span:not(.head) {
    height: 10px;
  }

  .coords input {
    border: 1px solid;
    border-color: #777 #ddd #ddd #777;
    text-align: right;
    font-family: 'Liberation Sans', sans-serif;
  }

  .apply {
    display: flex;
    align-items: center;
    gap: 12px;
    margin: 6px 0 0 7px;
  }

  .apply label {
    display: flex;
    align-items: center;
    gap: 2px;
  }

  .switch {
    width: 49px;
    border-color: #2f8ac0;
    box-shadow: inset 0 0 0 1px #8fdcf8;
  }

  .dock-note {
    position: absolute;
    right: 8px;
    top: 14px;
    z-index: 2;
    font-size: 15px;
    line-height: 18px;
    color: #e8151a;
    text-shadow: 1px 1px 1px #fff;
  }

  .docks .tabs {
    height: 19px;
  }

  .docks .outline {
    height: 18px;
    margin-left: 1px;
  }

  .status {
    display: flex;
    align-items: center;
    height: 16px;
    padding: 0 14px 0 4px;
    background: #efefef;
    font-size: 8px;
    white-space: nowrap;
  }

  .ready,
  .readout {
    flex: 1;
  }

  .readout {
    display: flex;
    justify-content: flex-end;
    gap: 6px;
  }
</style>
